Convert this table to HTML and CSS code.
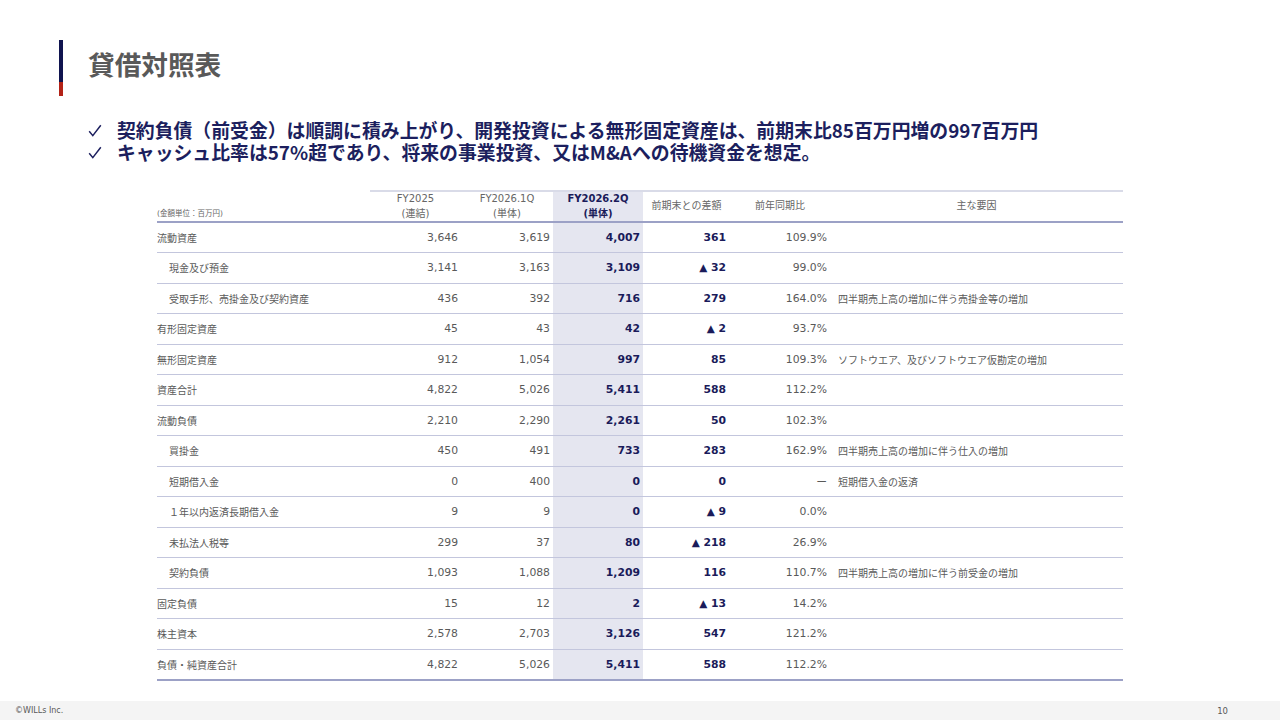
FILE: index.html
```html
<!DOCTYPE html>
<html lang="ja">
<head>
<meta charset="utf-8">
<title>貸借対照表</title>
<link rel="stylesheet" href="styles.css">
</head>
<body>
<div class="page">
  <header class="head">
    <div class="bar"></div>
    <h1 class="title">貸借対照表</h1>
  </header>
  <ul class="points">
    <li><svg class="chk" viewBox="0 0 14 13" width="14" height="13"><path d="M1.2 7.2 L4.8 11.6 L12.8 1.2" fill="none" stroke="#1c1f5e" stroke-width="1.5"/></svg>契約負債（前受金）は順調に積み上がり、開発投資による無形固定資産は、前期末比85百万円増の997百万円</li>
    <li><svg class="chk" viewBox="0 0 14 13" width="14" height="13"><path d="M1.2 7.2 L4.8 11.6 L12.8 1.2" fill="none" stroke="#1c1f5e" stroke-width="1.5"/></svg>キャッシュ比率は57%超であり、将来の事業投資、又はM&amp;Aへの待機資金を想定。</li>
  </ul>
  <table class="bs">
    <colgroup>
      <col class="c-label"><col class="c-num"><col class="c-num2"><col class="c-hl"><col class="c-diff"><col class="c-yoy"><col class="c-note">
    </colgroup>
    <thead>
      <tr>
        <th class="unit">(金額単位：百万円)</th>
        <th class="h">FY2025<br>(連結)</th>
        <th class="h">FY2026.1Q<br>(単体)</th>
        <th class="h hl hb">FY2026.2Q<br>(単体)</th>
        <th class="h">前期末との差額</th>
        <th class="h">前年同期比</th>
        <th class="h">主な要因</th>
      </tr>
    </thead>
    <tbody>
      <tr><td class="lbl">流動資産</td><td>3,646</td><td>3,619</td><td class="hl b">4,007</td><td class="b">361</td><td>109.9%</td><td class="note"></td></tr>
      <tr><td class="lbl sub">現金及び預金</td><td>3,141</td><td>3,163</td><td class="hl b">3,109</td><td class="b"><span class="tri">▲</span> 32</td><td>99.0%</td><td class="note"></td></tr>
      <tr><td class="lbl sub">受取手形、売掛金及び契約資産</td><td>436</td><td>392</td><td class="hl b">716</td><td class="b">279</td><td>164.0%</td><td class="note">四半期売上高の増加に伴う売掛金等の増加</td></tr>
      <tr><td class="lbl">有形固定資産</td><td>45</td><td>43</td><td class="hl b">42</td><td class="b"><span class="tri">▲</span> 2</td><td>93.7%</td><td class="note"></td></tr>
      <tr><td class="lbl">無形固定資産</td><td>912</td><td>1,054</td><td class="hl b">997</td><td class="b">85</td><td>109.3%</td><td class="note">ソフトウエア、及びソフトウエア仮勘定の増加</td></tr>
      <tr><td class="lbl">資産合計</td><td>4,822</td><td>5,026</td><td class="hl b">5,411</td><td class="b">588</td><td>112.2%</td><td class="note"></td></tr>
      <tr><td class="lbl">流動負債</td><td>2,210</td><td>2,290</td><td class="hl b">2,261</td><td class="b">50</td><td>102.3%</td><td class="note"></td></tr>
      <tr><td class="lbl sub">買掛金</td><td>450</td><td>491</td><td class="hl b">733</td><td class="b">283</td><td>162.9%</td><td class="note">四半期売上高の増加に伴う仕入の増加</td></tr>
      <tr><td class="lbl sub">短期借入金</td><td>0</td><td>400</td><td class="hl b">0</td><td class="b">0</td><td class="dash">ー</td><td class="note">短期借入金の返済</td></tr>
      <tr><td class="lbl sub">１年以内返済長期借入金</td><td>9</td><td>9</td><td class="hl b">0</td><td class="b"><span class="tri">▲</span> 9</td><td>0.0%</td><td class="note"></td></tr>
      <tr><td class="lbl sub">未払法人税等</td><td>299</td><td>37</td><td class="hl b">80</td><td class="b"><span class="tri">▲</span> 218</td><td>26.9%</td><td class="note"></td></tr>
      <tr><td class="lbl sub">契約負債</td><td>1,093</td><td>1,088</td><td class="hl b">1,209</td><td class="b">116</td><td>110.7%</td><td class="note">四半期売上高の増加に伴う前受金の増加</td></tr>
      <tr><td class="lbl">固定負債</td><td>15</td><td>12</td><td class="hl b">2</td><td class="b"><span class="tri">▲</span> 13</td><td>14.2%</td><td class="note"></td></tr>
      <tr><td class="lbl">株主資本</td><td>2,578</td><td>2,703</td><td class="hl b">3,126</td><td class="b">547</td><td>121.2%</td><td class="note"></td></tr>
      <tr class="last"><td class="lbl">負債・純資産合計</td><td>4,822</td><td>5,026</td><td class="hl b">5,411</td><td class="b">588</td><td>112.2%</td><td class="note"></td></tr>
    </tbody>
  </table>
  <footer class="foot">
    <span class="copy">©WILLs Inc.</span>
    <span class="pno">10</span>
  </footer>
</div>
</body>
</html>
```

FILE: styles.css
```css
* { box-sizing: border-box; }
html, body { margin: 0; padding: 0; background: #ffffff; }
body {
  font-family: "DejaVu Sans", "Noto Sans CJK JP", sans-serif;
  color: #595959;
}
.page {
  width: 1280px;
  height: 720px;
  display: flex;
  flex-direction: column;
  overflow: hidden;
}
.head {
  display: flex;
  align-items: center;
  padding: 40px 0 0 59px;
}
.bar {
  width: 4px;
  height: 56px;
  background: linear-gradient(to bottom, #10144f 0, #10144f 42px, #b32217 42px, #b32217 56px);
}
.title {
  margin: 0 0 8px 25px;
  font-family: "Noto Sans CJK JP", sans-serif;
  font-weight: 700;
  font-size: 26.67px;
  line-height: 36px;
  color: #595959;
}
.points {
  list-style: none;
  margin: 23px 0 0 0;
  padding: 0 0 0 88px;
  font-family: "Noto Sans CJK JP", sans-serif;
  font-weight: 700;
  font-size: 18.85px;
  line-height: 22px;
  color: #1c1f5e;
}
.points li { display: flex; align-items: center; white-space: nowrap; height: 22px; }
.chk {
  flex: none;
  margin-right: 15px;
}
.bs {
  margin: 27px 0 0 157px;
  width: 966px;
  border-collapse: collapse;
  table-layout: fixed;
}
.c-label { width: 213px; }
.c-num { width: 91px; }
.c-num2 { width: 92px; }
.c-hl { width: 90px; }
.c-diff { width: 87px; }
.c-yoy { width: 100px; }
.c-note { width: 293px; }
.bs thead th {
  height: 30px;
  padding: 0;
  font-weight: 400;
  font-size: 10px;
  line-height: 14.5px;
  color: #666666;
  vertical-align: middle;
  text-align: center;
  border-bottom: 2px solid #9ca1c6;
}
.bs thead th.h { border-top: 2px solid #d9dbe8; }
.bs thead th.unit {
  text-align: left;
  vertical-align: bottom;
  font-size: 7.5px;
  line-height: 12px;
  padding-bottom: 1px;
}
.bs thead th.hb {
  font-weight: 700;
  color: #1a1b5a;
}
.bs .hl { background: #e5e6f0; }
.bs tbody tr { height: 30.5px; }
.bs tbody td {
  padding: 0 3px 0 0;
  font-size: 10.8px;
  text-align: right;
  vertical-align: middle;
  border-bottom: 1px solid #c3c6dd;
  white-space: nowrap;
}
.bs tbody tr.last td { border-bottom: 2px solid #9ca1c6; }
.bs tbody td.lbl {
  text-align: left;
  font-size: 10px;
  padding-left: 0;
}
.bs tbody td.sub { padding-left: 12px; }
.bs tbody td.b {
  font-weight: 700;
  color: #1a1b5a;
}
.bs tbody td.b:not(.hl) { padding-right: 4px; }
.tri { font-size: 10.5px; font-weight: 400; }
.bs tbody td.dash { font-family: "Noto Sans CJK JP", sans-serif; }
.bs tbody td.note {
  text-align: left;
  font-size: 10px;
  padding-left: 8px;
}
.foot {
  margin-top: auto;
  height: 19px;
  background: #f4f4f4;
  display: flex;
  justify-content: space-between;
  align-items: center;
  padding: 0 52px 0 15px;
  font-size: 8px;
  color: #595959;
}
.pno { font-size: 8.5px; }
```
